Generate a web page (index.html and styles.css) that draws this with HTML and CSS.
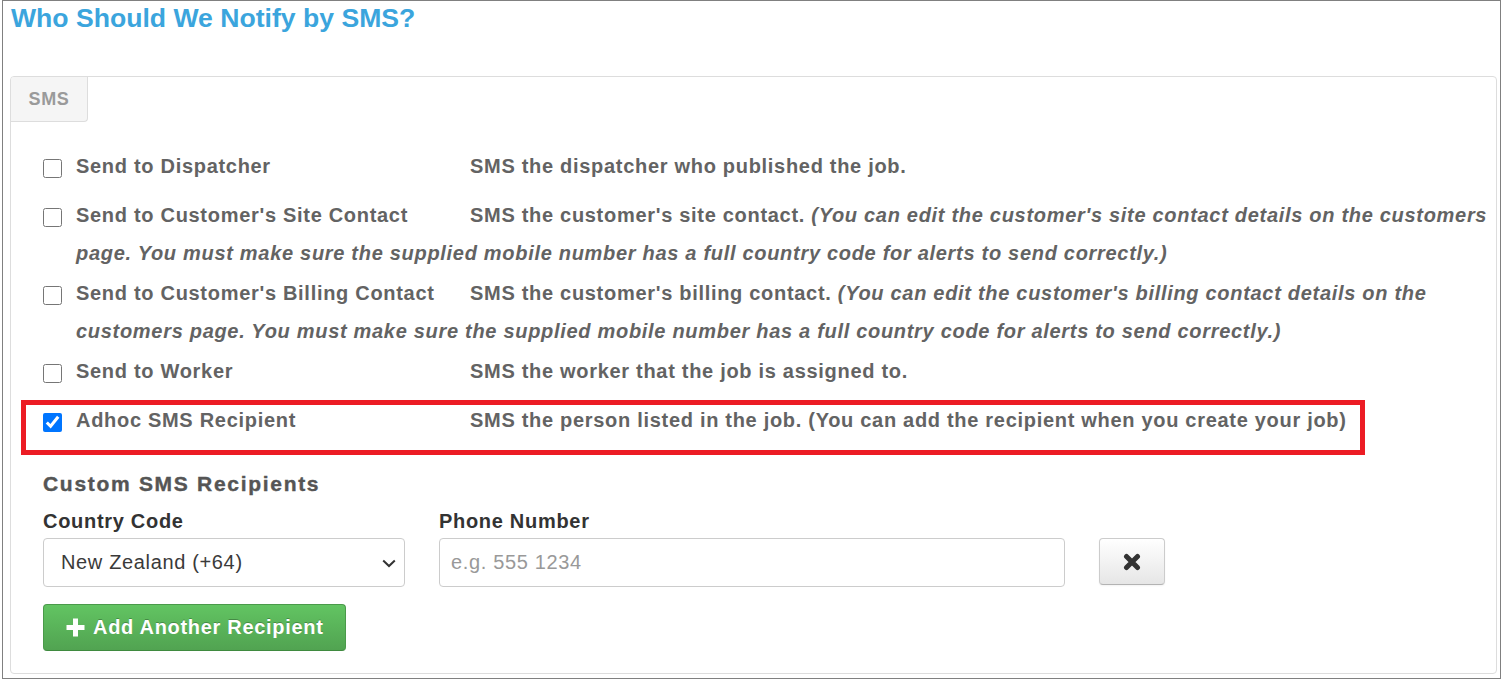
FILE: index.html
```html
<!DOCTYPE html>
<html lang="en">
<head>
<meta charset="utf-8">
<title>Who Should We Notify by SMS?</title>
<link rel="stylesheet" href="styles.css">
</head>
<body>
<div class="frame">
  <h1 class="title">Who Should We Notify by SMS?</h1>
  <div class="panel">
    <div class="tab">SMS</div>
    <div class="options">
      <label class="row">
        <input type="checkbox" class="cb">
        <span class="text"><span class="name">Send to Dispatcher</span><span class="desc">SMS the dispatcher who published the job.</span></span>
      </label>
      <label class="row">
        <input type="checkbox" class="cb">
        <span class="text"><span class="name">Send to Customer's Site Contact</span><span class="desc">SMS the customer's site contact. <em class="note">(You can edit the customer's site contact details on the customers page. You must make sure the supplied mobile number has a full country code for alerts to send correctly.)</em></span></span>
      </label>
      <label class="row">
        <input type="checkbox" class="cb">
        <span class="text"><span class="name">Send to Customer's Billing Contact</span><span class="desc">SMS the customer's billing contact. <em class="note">(You can edit the customer's billing contact details on the customers page. You must make sure the supplied mobile number has a full country code for alerts to send correctly.)</em></span></span>
      </label>
      <label class="row">
        <input type="checkbox" class="cb">
        <span class="text"><span class="name">Send to Worker</span><span class="desc">SMS the worker that the job is assigned to.</span></span>
      </label>
      <label class="row">
        <input type="checkbox" class="cb" checked>
        <span class="text"><span class="name">Adhoc SMS Recipient</span><span class="desc">SMS the person listed in the job. (You can add the recipient when you create your job)</span></span>
      </label>
    </div>
    <div class="custom">
      <h4 class="custom-title">Custom SMS Recipients</h4>
      <div class="fields">
        <div class="field country">
          <div class="field-label">Country Code</div>
          <div class="select">
            <span class="select-value">New Zealand (+64)</span>
            <svg class="chevron" width="14" height="9" viewBox="0 0 14 9"><polyline points="1.2,1.5 7,7 12.8,1.5" fill="none" stroke="#333" stroke-width="2"/></svg>
          </div>
        </div>
        <div class="field phone">
          <div class="field-label">Phone Number</div>
          <input class="input" type="text" placeholder="e.g. 555 1234">
        </div>
        <button class="btn-remove" type="button" aria-label="Remove">
          <svg width="18" height="18" viewBox="0 0 18 18"><path d="M3.5 3.5L14.5 14.5M14.5 3.5L3.5 14.5" stroke="#333" stroke-width="5" stroke-linecap="round"/></svg>
        </button>
      </div>
      <button class="btn-add" type="button">
        <svg class="plus" width="19" height="19" viewBox="0 0 19 19"><path d="M7 0.5h5v6.5h6.5v5H12v6.5H7V12H0.5V7H7z" fill="#fff"/></svg>
        <span>Add Another Recipient</span>
      </button>
    </div>
  </div>
  <div class="highlight"></div>
</div>
</body>
</html>
```

FILE: styles.css
```css
html, body {
  margin: 0;
  padding: 0;
  background: #fff;
}

body {
  font-family: "Liberation Sans", Arial, sans-serif;
  color: #333;
}

.frame {
  box-sizing: border-box;
  position: relative;
  width: 1499px;
  height: 679px;
  margin-left: 2px;
  border: 1px solid #808080;
  padding: 0 3px 0 7px;
  overflow: hidden;
}

.title {
  margin: 2px 0 0 1px;
  font-size: 26.6px;
  line-height: 30px;
  font-weight: bold;
  color: #3ba5dd;
}

.panel {
  margin-top: 43px;
  border: 1px solid #ddd;
  border-radius: 4px;
  padding-bottom: 22px;
}

.tab {
  box-sizing: border-box;
  width: 77px;
  height: 45px;
  line-height: 44px;
  text-align: center;
  background: #f5f5f5;
  border-right: 1px solid #ddd;
  border-bottom: 1px solid #ddd;
  border-radius: 3px 0 4px 0;
  font-size: 18px;
  font-weight: bold;
  letter-spacing: 0.7px;
  color: #9a9a9a;
}

.options {
  margin-top: 25px;
}

.row {
  display: flex;
  min-height: 47px;
  margin-bottom: 2px;
  padding: 0 4px 0 32px;
  font-size: 20px;
  line-height: 38px;
  font-weight: bold;
  letter-spacing: 0.7px;
  color: #636363;
}

.cb {
  flex: none;
  width: 19px;
  height: 19px;
  margin: 12px 14px 0 0;
  accent-color: #0075ff;
}

.text {
  display: block;
  flex: 1;
}

.name {
  display: inline-block;
  width: 394px;
}

.note {
  font-style: italic;
}

.custom {
  padding: 20px 0 0 32px;
}

.custom-title {
  margin: 0;
  font-size: 21px;
  line-height: 27px;
  font-weight: bold;
  letter-spacing: 1.7px;
  color: #555;
  -webkit-text-stroke: 0.4px #555;
}

.fields {
  display: flex;
  gap: 34px;
  margin-top: 12px;
}

.field-label {
  font-size: 20px;
  line-height: 24px;
  font-weight: bold;
  letter-spacing: 0.7px;
  color: #333;
  margin-bottom: 5px;
}

.country {
  width: 362px;
}

.phone {
  width: 626px;
}

.select {
  box-sizing: border-box;
  display: flex;
  align-items: center;
  justify-content: space-between;
  height: 49px;
  padding: 0 8px 0 17px;
  border: 1px solid #ccc;
  border-radius: 4px;
  background: #fff;
  font-size: 20px;
  letter-spacing: 0.65px;
  color: #3a3a3a;
}

.chevron {
  display: block;
  margin-top: 1px;
}

.input {
  box-sizing: border-box;
  display: block;
  width: 100%;
  height: 49px;
  margin: 0;
  padding: 0 11px;
  border: 1px solid #ccc;
  border-radius: 4px;
  font-family: "Liberation Sans", Arial, sans-serif;
  font-size: 20px;
  letter-spacing: 0.65px;
  color: #333;
  background: #fff;
  outline: none;
}

.input::placeholder {
  color: #999;
}

.btn-remove {
  align-self: flex-end;
  box-sizing: border-box;
  display: flex;
  align-items: center;
  justify-content: center;
  width: 66px;
  height: 47px;
  margin: 0 0 2px 0;
  padding: 0;
  border: 1px solid #ccc;
  border-bottom-color: #b3b3b3;
  border-radius: 4px;
  background: linear-gradient(to bottom, #ffffff, #e6e6e6);
  box-shadow: inset 0 1px 0 rgba(255, 255, 255, 0.2), 0 1px 2px rgba(0, 0, 0, 0.05);
}

.btn-add {
  box-sizing: border-box;
  display: flex;
  align-items: center;
  gap: 8px;
  width: 303px;
  height: 47px;
  margin-top: 17px;
  padding: 0 0 0 22px;
  border: 1px solid #4a9a4a;
  border-bottom-color: #3f8a3f;
  border-radius: 4px;
  background: linear-gradient(to bottom, #62c462, #51a351);
  font-family: "Liberation Sans", Arial, sans-serif;
  font-size: 20px;
  font-weight: bold;
  letter-spacing: 0.7px;
  color: #fff;
  text-shadow: 0 -1px 0 rgba(0, 0, 0, 0.25);
}

.plus {
  display: block;
  flex: none;
}

.highlight {
  position: absolute;
  left: 18px;
  top: 399px;
  width: 1344px;
  height: 55px;
  box-sizing: border-box;
  border: 5px solid #ec1c24;
  pointer-events: none;
}
```
